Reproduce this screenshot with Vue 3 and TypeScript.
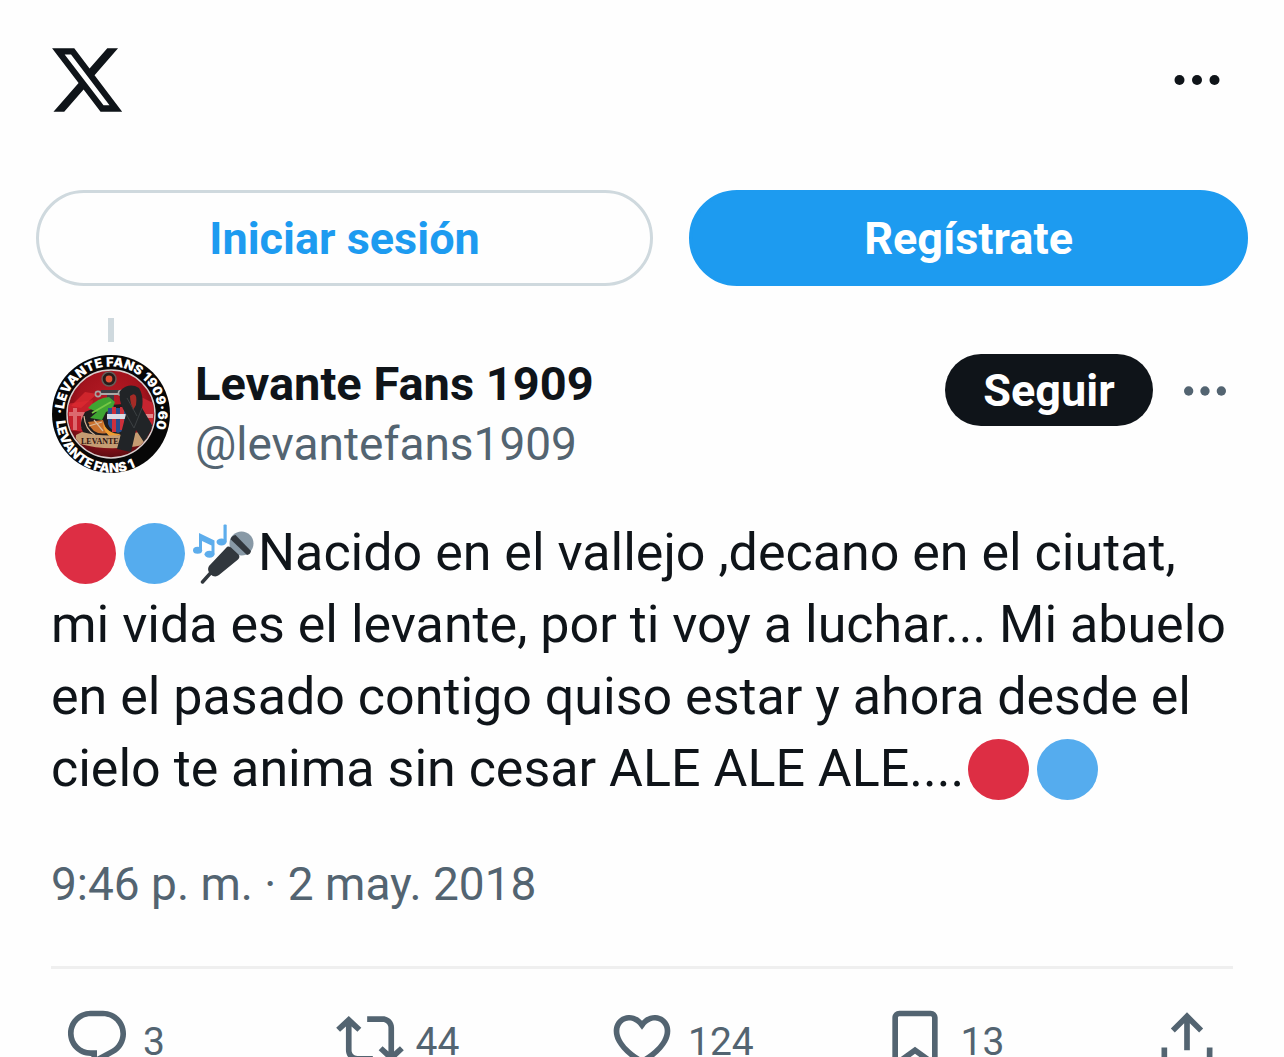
<script setup lang="ts">
interface Action {
  label: string
  count?: number
  path: string
}

const actions: Action[] = [
  {
    label: 'Responder',
    count: 3,
    path: 'M1.751 10c0-4.42 3.584-8 8.005-8h4.366c4.49 0 8.129 3.64 8.129 8.13 0 2.96-1.607 5.68-4.196 7.11l-8.054 4.46v-3.69h-.067c-4.49.1-8.183-3.51-8.183-8.01zm8.005-6c-3.317 0-6.005 2.69-6.005 6 0 3.37 2.77 6.08 6.138 6.01l.351-.01h1.761v2.3l5.087-2.81c1.951-1.08 3.163-3.13 3.163-5.36 0-3.39-2.744-6.13-6.129-6.13H9.756z',
  },
  {
    label: 'Repostear',
    count: 44,
    path: 'M4.5 3.88l4.432 4.14-1.364 1.46L5.5 7.55V16c0 1.1.896 2 2 2H13v2H7.5c-2.209 0-4-1.79-4-4V7.55L1.432 9.48.068 8.02 4.5 3.88zM16.5 6H11V4h5.5c2.209 0 4 1.79 4 4v8.45l2.068-1.93 1.364 1.46-4.432 4.14-4.432-4.14 1.364-1.46 2.068 1.93V8c0-1.1-.896-2-2-2z',
  },
  {
    label: 'Me gusta',
    count: 124,
    path: 'M16.697 5.5c-1.222-.06-2.679.51-3.89 2.16l-.805 1.09-.806-1.09C9.984 6.01 8.526 5.44 7.304 5.5c-1.243.07-2.349.78-2.91 1.91-.552 1.12-.633 2.78.479 4.82 1.074 1.97 3.257 4.27 7.129 6.61 3.87-2.34 6.052-4.64 7.126-6.61 1.111-2.04 1.03-3.7.477-4.82-.561-1.13-1.666-1.84-2.908-1.91zm4.187 7.69c-1.351 2.48-4.001 5.12-8.379 7.67l-.503.3-.504-.3c-4.379-2.55-7.029-5.19-8.382-7.67-1.36-2.5-1.41-4.86-.514-6.67.887-1.79 2.647-2.91 4.601-3.01 1.651-.09 3.368.56 4.798 2.01 1.429-1.45 3.146-2.1 4.796-2.01 1.954.1 3.714 1.22 4.601 3.01.896 1.81.846 4.17-.514 6.67z',
  },
  {
    label: 'Guardar',
    count: 13,
    path: 'M4 4.5C4 3.12 5.119 2 6.5 2h11C18.881 2 20 3.12 20 4.5v18.44l-8-5.71-8 5.71V4.5zM6.5 4c-.276 0-.5.22-.5.5v14.56l6-4.29 6 4.29V4.5c0-.28-.224-.5-.5-.5h-11z',
  },
  {
    label: 'Compartir',
    path: 'M12 2.59l5.7 5.7-1.41 1.42L13 6.41V16h-2V6.41l-3.3 3.3-1.41-1.42L12 2.59zM21 15l-.02 3.51c0 1.38-1.12 2.49-2.5 2.49H5.5C4.11 21 3 19.88 3 18.5V15h2v3.5c0 .28.22.5.5.5h12.98c.28 0 .5-.22.5-.5L19 15h2z',
  },
]
</script>

<template>
  <main class="page">
    <header class="topbar">
      <a class="logo" href="#" aria-label="X">
        <svg viewBox="0 0 24 24">
          <path d="M18.244 2.25h3.308l-7.227 8.26 8.502 11.24H16.17l-5.214-6.817L4.99 21.75H1.68l7.73-8.835L1.254 2.25H8.08l4.713 6.231zm-1.161 17.52h1.833L7.084 4.126H5.117z" />
        </svg>
      </a>
      <button class="dots dots-top" type="button" aria-label="Menú">
        <svg viewBox="0 0 24 24"><circle cx="5" cy="12" r="2" /><circle cx="12" cy="12" r="2" /><circle cx="19" cy="12" r="2" /></svg>
      </button>
    </header>

    <nav class="auth">
      <button class="pill login" type="button">Iniciar sesión</button>
      <button class="pill signup" type="button">Regístrate</button>
    </nav>

    <article class="post">
      <div class="thread"></div>
      <div class="author">
        <svg class="avatar" viewBox="0 0 120 120" role="img" aria-label="Levante Fans 1909">
          <defs>
            <clipPath id="disc"><circle cx="60" cy="60" r="43" /></clipPath>
            <radialGradient id="glow" cx="0.5" cy="0.4" r="0.65">
              <stop offset="0" stop-color="#b81c26" />
              <stop offset="0.6" stop-color="#a3131d" />
              <stop offset="1" stop-color="#4a0a0e" />
            </radialGradient>
            <path id="arc-top" d="M13 60 A47 47 0 1 1 93 93" />
            <path id="arc-bottom" d="M5 67 A55 55 0 0 0 115 60" />
          </defs>
          <circle cx="60" cy="60" r="59" fill="#070707" />
          <circle cx="60" cy="60" r="44" fill="url(#glow)" stroke="#d9cfcf" stroke-width="1.4" />
          <g clip-path="url(#disc)">
            <path d="M16 50 L42 46 L36 78 L17 76Z" fill="#c5202b" />
            <path d="M18 58h14v4H18zM22 54h4v22h-4zM30 58h4v16h-4z" fill="#e58a8d" opacity="0.7" />
            <path d="M84 40 L104 50 L102 74 L88 72Z" fill="#c52430" />
            <path d="M90 60h12v4H90zM91 70h10v3H91z" fill="#e9a3a4" opacity="0.8" />
            <path d="M20 52 L34 38 L46 40 L30 54Z" fill="#e02c32" opacity="0.7" />
            <path d="M34 58 Q25 74 36 82 L82 82 L88 62 L72 50 L48 52Z" fill="#201c1d" />
            <path d="M50 36 H70 V41 H63 V66 H56 V41 H50Z" fill="#3b3e42" />
            <circle cx="58" cy="25" r="7" fill="#271c1b" stroke="#675d58" stroke-width="1.5" />
            <circle cx="58" cy="25" r="3.4" fill="#e35234" />
            <circle cx="47" cy="40" r="2.6" fill="none" stroke="#a5a4a2" stroke-width="1.6" />
            <circle cx="70" cy="39" r="2.5" fill="none" stroke="#a5a4a2" stroke-width="1.6" />
            <path d="M50 40h17" stroke="#aaa9a7" stroke-width="2" />
            <path d="M37 54 Q46 44 58 43 L64 48 L61 55 L55 58 L51 66 L39 64 L46 58Z" fill="#3fa532" />
            <path d="M41 59 L53 52 L60 48" stroke="#76c744" stroke-width="2" fill="none" />
            <path d="M37 68 Q42 82 56 79 L52 66Z" fill="#c9702c" />
            <path d="M33 62 Q34 75 44 81M43 66l9 11M38 72l13-4" stroke="#d7b999" stroke-width="1.2" fill="none" />
            <path d="M57 54 H77 V70 Q74 77 67 79 Q59 76 57 70Z" fill="#294d8c" />
            <path d="M61 53h4v25h-4zM69 53h4v23h-4z" fill="#ce303b" />
            <path d="M56 60h21v5H56z" fill="#d9dce5" />
            <path d="M52 68 Q56 80 70 80 L62 84 Q52 80 52 68Z" fill="#ef9c32" />
            <path d="M25 81 L31 78 Q58 85 88 78 L98 82 L92 91 Q58 98 29 90 L24 94Z" fill="#c59c72" />
            <text x="30" y="90" class="banner">LEVANTE</text>
            <path d="M69 37 Q78 28 88 34 Q93 42 91 54 L110 86 L98 96 L85 76 L80 98 L66 95 L75 60 Q67 48 69 37Z" fill="#212427" />
            <path d="M79 42 Q87 36 85 51 L82 56 Q79 48 79 42Z" fill="#a52b26" />
            <path d="M91 54L83 74M75 60L83 74M76 44L86 62" stroke="#3c4043" stroke-width="1" fill="none" />
          </g>
          <text class="ring"><textPath href="#arc-top">·LEVANTE FANS 1909·60</textPath></text>
          <text class="ring"><textPath href="#arc-bottom">LEVANTE FANS 1</textPath></text>
        </svg>
        <div class="names">
          <a class="name" href="#">Levante Fans 1909</a>
          <a class="handle" href="#">@levantefans1909</a>
        </div>
        <button class="follow" type="button">Seguir</button>
        <button class="dots dots-post" type="button" aria-label="Más opciones">
          <svg viewBox="0 0 24 24"><circle cx="5" cy="12" r="2" /><circle cx="12" cy="12" r="2" /><circle cx="19" cy="12" r="2" /></svg>
        </button>
      </div>

      <p class="text">
        <span class="line"><svg class="emoji red" viewBox="0 0 36 36" role="img" aria-label="🔴"><circle cx="18" cy="18" r="18" /></svg><svg class="emoji blue" viewBox="0 0 36 36" role="img" aria-label="🔵"><circle cx="18" cy="18" r="18" /></svg><svg class="emoji" viewBox="0 0 61 61" role="img" aria-label="🎤">
          <circle cx="48.5" cy="20.5" r="12" fill="#8899a6" />
          <path d="M37.5 16.2 Q39 12.5 42.5 12 L58 28 Q57.5 31.5 54 32Z" fill="#31373d" />
          <path d="M33 25 Q35 22.5 38 24.5 L45.5 31.5 Q47.5 34 45 36.5 L26 52 Q22 55 17.5 51.5 Q13.5 47 16 43Z" fill="#31373d" />
          <path d="M18 49.5 L9.5 59" stroke="#31373d" stroke-width="3.4" stroke-linecap="round" />
          <g fill="#5dadec">
            <path d="M6 10 L21.5 17.5 V31 H18.5 V22.5 L9 18 V27 H6Z" />
            <ellipse cx="4.6" cy="27.3" rx="4.6" ry="3.5" />
            <ellipse cx="16.5" cy="31.3" rx="5" ry="3.5" />
            <rect x="30.5" y="1.5" width="3.2" height="18" rx="1" />
            <ellipse cx="28.5" cy="19" rx="5" ry="3.4" />
          </g>
        </svg>Nacido en el vallejo ,decano en el ciutat,</span>
        <span class="line">mi vida es el levante, por ti voy a luchar... Mi abuelo</span>
        <span class="line">en el pasado contigo quiso estar y ahora desde el</span>
        <span class="line">cielo te anima sin cesar ALE ALE ALE....<svg class="emoji red" viewBox="0 0 36 36" role="img" aria-label="🔴"><circle cx="18" cy="18" r="18" /></svg><svg class="emoji blue" viewBox="0 0 36 36" role="img" aria-label="🔵"><circle cx="18" cy="18" r="18" /></svg></span>
      </p>

      <a class="time" href="#">9:46 p. m. · 2 may. 2018</a>

      <footer class="actions">
        <button v-for="action in actions" :key="action.label" class="action" type="button" :aria-label="action.label">
          <svg viewBox="0 0 24 24"><path :d="action.path" /></svg>
          <span v-if="action.count !== undefined" class="count">{{ action.count }}</span>
        </button>
      </footer>
    </article>
  </main>
</template>

<style>
body {
  margin: 0;
  background: #fefefe;
}
</style>

<style scoped>
.page {
  height: 100vh;
  overflow: hidden;
  color: #0f1419;
  font-family: Roboto, "Noto Sans", sans-serif;
  font-size: 46px;
  line-height: 60px;
}

button {
  margin: 0;
  padding: 0;
  border: 0;
  background: none;
  color: inherit;
  font: inherit;
  cursor: pointer;
}

a {
  color: inherit;
  text-decoration: none;
}

svg {
  fill: currentColor;
}

.topbar {
  display: flex;
  align-items: center;
  justify-content: space-between;
  padding: 41px 57px 71px 48px;
}

.logo svg {
  display: block;
  width: 78px;
  height: 78px;
}

.dots svg {
  display: block;
  width: 100%;
  height: 100%;
}

.dots-top {
  width: 60px;
  height: 60px;
}

.auth {
  display: flex;
  gap: 36px;
  padding: 0 36px;
}

.pill {
  box-sizing: border-box;
  height: 96px;
  padding-top: 2px;
  border: 3px solid;
  border-radius: 48px;
  font-size: 45px;
  font-weight: 700;
}

.login {
  flex: 21;
  border-color: #cfd9de;
  color: #1d9bf0;
}

.signup {
  flex: 19;
  border-color: #1d9bf0;
  background: #1d9bf0;
  color: #fff;
}

.post {
  padding: 32px 51px 0;
}

.thread {
  width: 6px;
  height: 24px;
  margin: 0 57px 12px;
  background: #cfd9de;
}

.author {
  display: flex;
  align-items: flex-start;
}

.avatar {
  flex: none;
  width: 120px;
  height: 120px;
}

.ring {
  fill: #fff;
  font-family: Inter, sans-serif;
  font-size: 13px;
  font-weight: 900;
}

.banner {
  fill: #32130f;
  font-family: "Liberation Serif", serif;
  font-size: 8px;
  font-weight: 700;
}

.names {
  display: flex;
  flex: 1;
  flex-direction: column;
  align-items: flex-start;
  margin-left: 24px;
}

.name {
  font-size: 47px;
  font-weight: 700;
}

.handle,
.time,
.action,
.dots-post {
  color: #536471;
}

.follow {
  width: 208px;
  height: 72px;
  padding-top: 2px;
  border-radius: 36px;
  background: #0f1419;
  color: #fff;
  font-size: 45px;
  font-weight: 700;
}

.dots-post {
  width: 56px;
  height: 56px;
  margin: 9px 0 0 24px;
}

.text {
  margin: 43px 0 49px;
  font-size: 52px;
  line-height: 72px;
}

.line {
  display: block;
  white-space: nowrap;
}

.emoji {
  width: 61px;
  height: 61px;
  margin: 0 4px;
  vertical-align: -14px;
}

.red {
  color: #dd2e44;
}

.blue {
  color: #55acee;
}

.time {
  display: block;
}

.actions {
  display: flex;
  margin-top: 52px;
  padding: 36px 12px;
  border-top: 3px solid #efefef;
}

.action {
  display: flex;
  flex: 1;
  align-items: center;
  gap: 12px;
  font-size: 39px;
}

.action:last-child {
  flex: none;
}

.action svg {
  width: 68px;
  height: 68px;
}

.count {
  padding-top: 6px;
}
</style>
